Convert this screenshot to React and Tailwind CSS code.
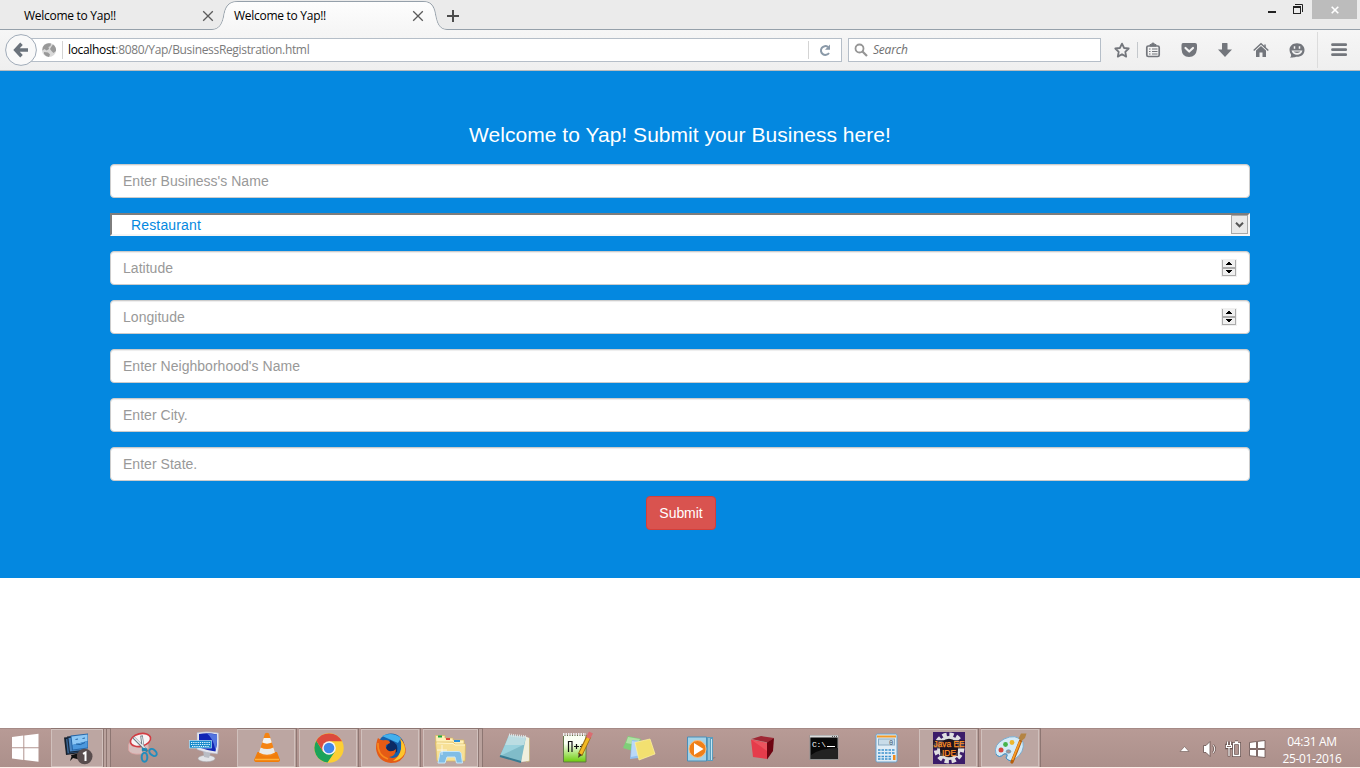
import React from 'react';

const UI = "font-['Open_Sans','Noto_Sans',sans-serif]";

/* ---------- tab strip ---------- */
function CloseX() {
  return (
    <svg width="12" height="12" viewBox="0 0 12 12" className="shrink-0">
      <path d="M1.2 1.2 10.8 10.8M10.8 1.2 1.2 10.8" stroke="#5a5a5a" strokeWidth="1.3" fill="none" />
    </svg>
  );
}

function TabStrip() {
  return (
    <div className={`relative flex h-[30px] w-full items-start bg-[#ebebeb] text-[12px] text-black ${UI}`}>
      <svg className="absolute left-0 top-0" width="1360" height="30" viewBox="0 0 1360 30">
        <defs>
          <linearGradient id="tabFill" x1="0" y1="0" x2="0" y2="1">
            <stop offset="0" stopColor="#fdfdfd" />
            <stop offset="1" stopColor="#f6f6f6" />
          </linearGradient>
        </defs>
        <path d="M0 29.5H212C219 29.5 222 24 223.5 17C225 8 227 1.5 238 1.5H423C433 1.5 434.500 8 436 17C437.500 24 440 29.5 447 29.5H1360" fill="none" stroke="#95a0aa" />
        <path d="M212 30C219 30 222.500 24 224 17C225.500 8 228 2 238 2H423C432 2 434 8 435.500 17C437 24 440 30 447 30Z" fill="url(#tabFill)" />
      </svg>
      <div className="relative flex h-8 w-[218px] items-center justify-between pl-6 pr-1">
        <span className="tracking-[-0.28px]">Welcome to Yap!!</span>
        <CloseX />
      </div>
      <div className="relative flex h-8 w-[210px] items-center justify-between pl-4 pr-1">
        <span className="tracking-[-0.28px]">Welcome to Yap!!</span>
        <CloseX />
      </div>
      <div className="relative flex h-8 items-center pl-[19px]">
        <svg width="12" height="12" viewBox="0 0 12 12">
          <path d="M6 0V12M0 6H12" stroke="#4c4c4c" strokeWidth="2" />
        </svg>
      </div>
      <div className="relative ml-auto flex h-[19px]">
        <svg width="48" height="19" viewBox="1264 0 48 19">
          <path d="M1268 11h8v2h-8z" fill="#222" />
          <path d="M1295 4.500H1302.500V12" fill="none" stroke="#222" />
          <path d="M1293 6h8v8h-8zM1294 8v5h6V8z" fill="#222" fillRule="evenodd" />
        </svg>
        <div className="mr-[3px] flex h-[19px] w-[45px] items-center justify-center bg-[#bcbcbc]">
          <svg width="8" height="8" viewBox="0 0 8 8" className="ml-[1px]">
            <path d="M.7.7 7.3 7.3M7.3.7.7 7.3" stroke="#fff" strokeWidth="1.6" />
          </svg>
        </div>
      </div>
    </div>
  );
}

/* ---------- navigation bar ---------- */
function ToolbarIcons() {
  return (
    <svg width="259" height="40" viewBox="1101 30 259 40" className="shrink-0">
      <path d="M1122 43.600 1124.100 48 1128.700 48.500 1125.300 51.800 1126.200 56.600 1122 54.200 1117.800 56.600 1118.700 51.800 1115.300 48.500 1119.900 48Z" fill="none" stroke="#73767c" strokeWidth="1.8" strokeLinejoin="round" />
      <path d="M1137.500 42V58" stroke="#c4c8cc" />
      <rect x="1146.800" y="46" width="12.400" height="10.500" rx="1.500" fill="none" stroke="#73767c" strokeWidth="1.700" />
      <path d="M1150 46V44.500H1151.500a1.500 1.500 0 0 1 3 0H1156V46Z" fill="#73767c" stroke="#73767c" />
      <path d="M1149 49h1.500M1152 49h5.500M1149 51.500h1.500M1152 51.500h5.500M1149 54h1.500M1152 54h5.500" stroke="#73767c" strokeWidth="1.200" />
      <path d="M1183 43H1195Q1197 43 1197 45V49Q1196 57 1189 57Q1182 57 1181.500 49V45Q1181.500 43 1183 43Z" fill="#73767c" />
      <path d="M1185.500 48 1189.200 51.500 1193 48" fill="none" stroke="#f4f4f4" strokeWidth="2.200" strokeLinecap="round" strokeLinejoin="round" />
      <path d="M1222 43.500Q1222 43 1222.500 43H1227Q1227.500 43 1227.500 43.500V49.500H1232L1225 57 1218 49.500H1222Z" fill="#73767c" />
      <path d="M1253.700 50.500 1261 43.800 1268.300 50.500" fill="none" stroke="#73767c" strokeWidth="1.500" />
      <path d="M1256 50.500 1261 46 1266 50.500V57H1262.500V52.500H1259.500V57H1256Z" fill="#73767c" />
      <path d="M1265 44.500v3" stroke="#73767c" strokeWidth="1.500" />
      <path d="M1297 43.200C1301.500 43.200 1304.500 46 1304.500 50S1301.500 56.800 1297 56.800C1296 56.800 1294.500 57.500 1290 57.800C1291 56.500 1291.300 55.500 1291 54.500C1290 53 1289.500 51.500 1289.500 50C1289.500 46 1292.500 43.200 1297 43.200Z" fill="#73767c" />
      <path d="M1294.500 46.200v2.600M1299.500 46.200v2.600" stroke="#f4f4f4" strokeWidth="1.500" />
      <path d="M1291.500 50.400H1302.500Q1301 54.700 1297 54.700T1291.500 50.400Z" fill="#f4f4f4" />
      <path d="M1293.500 51.600H1300.500Q1299.500 53 1297 53T1293.500 51.600Z" fill="#73767c" />
      <path d="M1317.500 32V68" stroke="#dcdcdc" />
      <path d="M1332.500 44.700h13.200M1332.500 49.700h13.200M1332.500 54.700h13.200" stroke="#73767c" strokeWidth="2.800" strokeLinecap="round" />
    </svg>
  );
}

function NavBar() {
  return (
    <div className={`flex h-[41px] w-full items-start border-b border-[#b9bdc0] bg-linear-to-b from-[#f6f6f6] to-[#efefef] text-[12px] ${UI}`}>
      <div className="relative mt-2 ml-[21px] flex h-6 w-[821px] shrink-0 items-center border border-[#b5bec8] bg-white">
        <svg width="32" height="32" viewBox="5 34 32 32" className="absolute -left-[17px] -top-[5px]">
          <circle cx="21" cy="50" r="15.400" fill="#f9f9f9" stroke="#a0abb8" />
          <path d="M28 50H17M21.500 43.800 15.700 50 21.500 56.200" fill="none" stroke="#6b737c" strokeWidth="3.500" />
        </svg>
        <svg width="20" height="20" viewBox="39 40 20 20" className="ml-[17px] shrink-0">
          <circle cx="49" cy="50" r="7" fill="#d9d9d9" />
          <path d="M44.500 44.800Q47.500 42.500 51 43.500L50.500 46 48.500 47 49 49 46.500 50.500 44.500 49 42.300 50.500Q42 47 44.500 44.800ZM53 44.500Q56.500 47 56 51L53.500 53 51.500 51 50 49 51.500 46.500ZM44 52 48 52.500 50 54.500 49 57Q45.500 56.500 44 54Z" fill="#999" />
        </svg>
        <div className="ml-[3px] h-[18px] w-px bg-[#d4d4d4]" />
        <span className="ml-[5px] whitespace-nowrap tracking-[-0.33px] text-[#7b7b7b]">
          <span className="text-black">localhost</span>:8080/Yap/BusinessRegistration.html
        </span>
        <div className="ml-auto flex h-[18px] w-[33px] items-center justify-center border-l border-[#d4d4d4]">
          <svg width="14" height="14" viewBox="0 0 14 14">
            <path d="M11 10A4.400 4.400 0 1 1 10 4" fill="none" stroke="#8a99a8" strokeWidth="2" />
            <path d="M12 1.500V6.700H7Z" fill="#8a99a8" />
          </svg>
        </div>
      </div>
      <div className="mt-2 ml-[6px] flex h-6 w-[253px] shrink-0 items-center border border-[#b5bec8] bg-white">
        <svg width="14" height="15" viewBox="0 0 14 15" className="ml-[5px]">
          <circle cx="5.500" cy="5.500" r="4" fill="none" stroke="#959595" strokeWidth="1.800" />
          <path d="M8.500 8.500 13 13" stroke="#959595" strokeWidth="2.200" />
        </svg>
        <span className="ml-[5px] italic tracking-[-0.2px] text-[#6f6f6f]">Search</span>
      </div>
      <ToolbarIcons />
    </div>
  );
}

/* ---------- page ---------- */
function Spinner() {
  return (
    <svg width="16" height="18" viewBox="0 0 16 18" className="shrink-0">
      <rect width="16" height="18" fill="#f0f0f0" />
      <path d="M1.500 1V17M14.500 1V17" stroke="#ababab" />
      <path d="M1 9H15" stroke="#ababab" strokeWidth="2" />
      <path d="M1 16.500H15" stroke="#ababab" />
      <path d="M5 6V5H6V4H7V3H9V4H10V5H11V6ZM5 11H11V12H10V13H9V14H7V13H6V12H5Z" fill="#000" />
    </svg>
  );
}

function Field({ label, number }) {
  return (
    <div className="mb-[15px] flex h-[34px] items-center rounded-[4px] border border-[#ccc] bg-white pl-3 pr-3 shadow-[inset_0_1px_1px_rgba(0,0,0,0.075)]">
      <input
        className="min-w-0 flex-1 bg-transparent text-[14px] leading-5 tracking-[0.03px] text-[#555] outline-none placeholder:text-[#999]"
        placeholder={label}
      />
      {number && <Spinner />}
    </div>
  );
}

function RegistrationPage() {
  return (
    <main className="h-[507px] w-full bg-[#0488e0] font-['Liberation_Sans',Arial,sans-serif]">
      <form className="mx-auto flex w-[1140px] flex-col pt-[50px]">
        <h1 className="mb-[13px] h-[30px] text-center text-[21px] leading-[28px] tracking-[0.04px] text-white">
          Welcome to Yap! Submit your Business here!
        </h1>
        <Field label="Enter Business's Name" />
        <div className="mb-[15px] flex h-[23px] items-center justify-between border-2 border-b-[#f5f5f5] border-l-[#7d7d7d] border-r-[#f5f5f5] border-t-[#7d7d7d] bg-white pl-[19px] text-[14px] text-[#0488e0]">
          <span className="leading-5 tracking-[0.15px]">Restaurant</span>
          <div className="flex h-[19px] w-[17px] items-center justify-center border border-[#a9a9a9] bg-[#e9e9e9]">
            <svg width="9" height="7" viewBox="0 0 9 7">
              <path d="M1 1.800 4.500 5.300 8 1.800" fill="none" stroke="#555" strokeWidth="2" />
            </svg>
          </div>
        </div>
        <Field label="Latitude" number />
        <Field label="Longitude" number />
        <Field label="Enter Neighborhood's Name" />
        <Field label="Enter City." />
        <Field label="Enter State." />
        <button type="button" className="ml-[536px] h-[34px] w-[70px] rounded-[4px] border border-[#d43f3a] bg-[#d9534f] text-[14px] leading-5 tracking-[-0.05px] text-white">
          Submit
        </button>
      </form>
    </main>
  );
}

/* ---------- taskbar ---------- */
/* Each drawing uses screen coordinates; its svg windows it by the cell's left edge. */
const DesktopArt = () => (
  <g>
    <path d="M64 737.500 80 736 81 753 66 755Z" fill="#16202c" />
    <path d="M66 739 80 737.500V752L67.500 753.500Z" fill="#3c6796" />
    <path d="M67 736.500 83 735 84 751 69 753Z" fill="#1a2c42" />
    <path d="M68.500 738 83 736.500V750L70 751.500Z" fill="#4b86c2" />
    <path d="M70.500 735.500 88 733.500 88 748.500 72 750.500Z" fill="#2566a8" />
    <path d="M71.500 736.500 87.500 734.500V741L72.500 745Z" fill="#8cc7f5" />
    <path d="M72.500 745 87.500 741V747.500L73 749.500Z" fill="#4c98dd" />
    <path d="M75.500 739.500 78 739M82.500 738.500 85 738M76 744Q80 746 85 742.500" stroke="#1c5c9c" strokeWidth=".9" fill="none" />
    <path d="M71 755 80 753 78 757 82 760 77 759 73 758 70 761 71.500 756.500Z" fill="#111" />
    <circle cx="84.700" cy="756.500" r="7.800" fill="#594d4e" />
    <path d="M83 753.800 85.500 752.500V761" fill="none" stroke="#fff" strokeWidth="2" />
  </g>
);
const SnipArt = () => (
  <g>
    <path d="M128.500 745Q130 738 140 741L148 744Q150 752 141 754Q130 755 128.500 750Z" fill="#d7bebd" stroke="#dc9fa0" strokeWidth=".8" />
    <ellipse cx="140.500" cy="740" rx="10.300" ry="6.300" fill="#f7f4f5" stroke="#d23c42" strokeWidth="1.600" transform="rotate(-14 140.500 740)" />
    <path d="M133.500 737.500 147.500 751.500M141.500 735.500 143.500 751.500" stroke="#6d7880" strokeWidth="2.600" />
    <path d="M134 737.500 146 749.500M141.700 736.500 143.500 749" stroke="#edf3f6" strokeWidth="1.100" />
    <path d="M142 749 147 750" stroke="#1e87b4" strokeWidth="3" />
    <ellipse cx="144.500" cy="757.300" rx="2.800" ry="4.500" fill="none" stroke="#228dbd" strokeWidth="2" />
    <ellipse cx="153" cy="752.500" rx="4.300" ry="2.800" fill="none" stroke="#228dbd" strokeWidth="2" transform="rotate(42 153 752.500)" />
  </g>
);
const KeyboardArt = () => (
  <g>
    <ellipse cx="206.500" cy="758.500" rx="8.500" ry="3.300" fill="#e2e4e8" stroke="#aaa6aa" strokeWidth=".6" />
    <path d="M203 750 211 752 209 758 204 757Z" fill="#b9bdc5" />
    <path d="M197 732.500Q208 731 218.500 733Q219.500 745 217.500 754Q206 753 197 749.500Z" fill="#e6e7ee" stroke="#aaaabb" strokeWidth=".5" />
    <path d="M199 734Q208 732.500 217 734.500Q217.500 744 215.500 751.500Q206 750 199 747.500Z" fill="#1226b5" />
    <path d="M207 733.500 217 734.500Q217.500 744 215.500 750Q213 738 207 733.500Z" fill="#5475de" />
    <rect x="189.500" y="740.500" width="22" height="7.500" fill="#168acb" stroke="#b3e1f8" strokeWidth=".7" />
    <path d="M191 742.500H210M191 744.500H210M192 746.500H209" stroke="#e7f8ff" strokeDasharray="1.300 .9" />
  </g>
);
const VlcArt = () => (
  <g>
    <path d="M257.500 752H277L280 760Q280 762 277 762H257Q254 762 254 760Z" fill="#f07d0b" />
    <path d="M255 759.500H279" stroke="#ffb23d" strokeWidth="1.500" />
    <path d="M265 733.500Q267 732 269 733.500L275.500 754Q267 759 258.500 754Z" fill="#f58413" />
    <path d="M263.700 738H270.300L271.800 742.500Q267 744.800 262.300 742.500Z" fill="#f4f4f2" />
    <path d="M260.600 747.500Q267 750.500 273.400 747.500L275 752.500Q267 757 259 752.500Z" fill="#e9eae9" />
  </g>
);
const ChromeArt = () => (
  <g>
    <circle cx="329" cy="748" r="14.700" fill="#fccf33" />
    <path d="M316.300 740.700A14.700 14.700 0 0 0 327.500 762.600L335 751.500 323 751.500Z" fill="#1ba35a" />
    <path d="M316.300 740.700 323 751.500 329 741.200H342A14.700 14.700 0 0 0 316.300 740.700Z" fill="#dc4b3d" />
    <circle cx="329" cy="748" r="6.800" fill="#f4f5f5" />
    <circle cx="329" cy="748" r="5.300" fill="#3f86ea" />
  </g>
);
const FirefoxArt = () => (
  <g>
    <circle cx="391" cy="747" r="13.500" fill="#1461ad" />
    <path d="M382 736Q392 731 401 738L398 743 389 739Z" fill="#42b0ed" />
    <path d="M390 740Q399 743 397 752L388 755 385 750Z" fill="#0c2a64" />
    <path d="M378 738Q381 741 385 740Q390 740 390 743L386 745Q385 749 389 751Q393 752 396 749Q396 756 389 757Q396 760 400 753Q403 746 400 738Q407 745 405.500 753Q402 763 391 763Q378 762 376 749Q376 742 378 738Z" fill="#e55b15" />
    <path d="M400 738Q407 746 404.500 754Q400 761 393 761Q400 756 401 749Q402 743 400 738Z" fill="#fdc52d" />
    <path d="M378 743Q377 755 388 759" stroke="#f98a1e" strokeWidth="1.500" fill="none" />
  </g>
);
const ExplorerArt = () => (
  <g>
    <path d="M435.500 735.500H445V738H453V740H464V745H436Z" fill="#fff0b7" stroke="#d8b85d" strokeWidth=".7" />
    <path d="M438 736.500h4" stroke="#1aa743" strokeWidth="2" /><path d="M446 739h4" stroke="#e14738" strokeWidth="2" /><path d="M454 741h6" stroke="#298ed6" strokeWidth="2" />
    <path d="M435.500 742H453L455 744H465.500L465 761H437Z" fill="#f7e096" stroke="#d8b85d" strokeWidth=".7" />
    <path d="M437 743 453 743.500 455 745H465" stroke="#fff6ce" fill="none" />
    <path d="M440 753Q440 751.500 442 751.500H458Q460.500 751.500 461 753L462.500 763H456.500L455 757H447L445 763H438Z" fill="#80bde5" stroke="#c7e7f8" />
    <path d="M442 745V755M437 750H447" stroke="#fff" opacity=".7" />
  </g>
);
const NotepadArt = () => (
  <g>
    <path d="M524 736 529.500 738V761L521 762Z" fill="#f1efdd" />
    <path d="M529.500 738V761L526 762" stroke="#c9b989" fill="none" />
    <path d="M509 735 526 737 521 762 500 756Z" fill="#80bcc9" />
    <path d="M509 735 526 737 524 745 505 745Z" fill="#bcdde2" />
    <path d="M505 745 523 745 500 756Z" fill="#9bd2dd" />
    <path d="M500 756 521 762" stroke="#377b92" strokeWidth="2" />
    <path d="M509 735 527 737" stroke="#dfe5e5" strokeWidth="3" strokeDasharray="1 1" />
  </g>
);
const NppArt = () => (
  <g>
    <defs><linearGradient id="npp" x1="0" y1="0" x2="0" y2="1"><stop offset=".3" stopColor="#fafff3" /><stop offset="1" stopColor="#6bcd0a" /></linearGradient></defs>
    <path d="M563.500 735.500H586V762H563.500Z" fill="url(#npp)" stroke="#647748" />
    <path d="M563 734.500H586" stroke="#eee" strokeWidth="3" strokeDasharray="1.500 1" />
    <path d="M568.500 752V741.500H572V752M574 746.500H579M576.500 744V749M580 746.500H584.500M582.200 744V749" fill="none" stroke="#111" strokeWidth="1.200" />
    <path d="M589 736 580 755" stroke="#9b6b10" strokeWidth="5" /><path d="M588.800 737 580.500 754" stroke="#f2ba24" strokeWidth="3" />
    <path d="M591 732.500 588 738" stroke="#db6c71" strokeWidth="4.500" /><path d="M579 753 578 758 582 755Z" fill="#463b26" />
  </g>
);
const StickyArt = () => (
  <g>
    <path d="M628 736 641 739 636 752 623 748Z" fill="#7fcf78" /><path d="M628 737 640 739 637 745 626 743Z" fill="#b0e2a5" />
    <path d="M632 740 648 742 647 757 630 759Z" fill="#91c0ef" /><path d="M632 741 647 743 646 754 631 757Z" fill="#b9d8f7" />
    <path d="M635 742.500 650 739 655 754 639 760Z" fill="#f2e070" stroke="#fff4a0" strokeWidth=".7" />
  </g>
);
const MediaArt = () => (
  <g>
    <path d="M699 758 716 757 711 761H699Z" fill="#7c6968" opacity=".5" />
    <path d="M692 737H713V761H692Z" fill="#5a9dbe" /><path d="M709 738V760M711.500 739V760" stroke="#c4e6f3" />
    <path d="M687.500 737H706.500V761H687.500Z" fill="#a4d2e7" stroke="#4a8fb8" />
    <circle cx="697.500" cy="749" r="8.500" fill="#f08018" stroke="#f8bb7c" />
    <path d="M694 743 703.500 749 694 755Z" fill="#fff" />
  </g>
);
const CubeArt = () => (
  <g>
    <path d="M751.500 739 761 736 774 738 767.500 742.500Z" fill="#9f2734" />
    <path d="M751 739.500 767 743V759L753 757Z" fill="#e53c4b" />
    <path d="M767 742.500 774 738 773 751 767 759.500Z" fill="#6e0411" />
    <path d="M751.500 740 767 743V751Z" fill="#f0636b" opacity=".6" />
  </g>
);
const CmdArt = () => (
  <g>
    <rect x="810" y="735.500" width="28" height="24" fill="#080808" stroke="#929292" />
    <path d="M810 736.500H838" stroke="#ddd" strokeWidth="2" /><path d="M832 736.500H837" stroke="#555" strokeDasharray="1 1" />
    <path d="M811 755Q820 748 838 748V759H811Z" fill="#222" />
    <text x="812" y="746.500" fontSize="8" fill="#fff" fontFamily="Liberation Mono, monospace" textLength="14">C:\</text>
    <path d="M827 746.500h8" stroke="#fff" />
  </g>
);
const CalcArt = () => (
  <g>
    <rect x="876" y="734" width="21" height="28" rx="1.500" fill="#e1edf6" stroke="#6aa5d0" />
    <path d="M877 736.500H896" stroke="#f29a26" strokeWidth="2" />
    <rect x="878.500" y="739" width="16" height="6" fill="#c9dce9" stroke="#8cadc4" />
    <text x="889" y="744.500" fontSize="7" fill="#3d5669" fontFamily="Liberation Mono, monospace">0</text>
    <path d="M878 750H895M878 753H895M878 756.500H892M878 759H892" stroke="#3c91cd" strokeWidth="1.700" strokeDasharray="2.500 1" />
    <path d="M893 755h2.500v5h-2.500z" fill="#f08b1b" />
  </g>
);
const EclipseArt = () => (
  <g>
    <rect x="933" y="732" width="32" height="32" fill="#3b1c69" />
    <circle cx="949" cy="748" r="13.200" fill="none" stroke="#e0dfe2" strokeWidth="4.500" strokeDasharray="4.200 2.711" />
    <circle cx="949" cy="748" r="10.600" fill="#17121c" stroke="#dedee0" strokeWidth="2.800" />
    <path d="M933 740H965V748.500H958V756H940V748.500H933Z" fill="#21141d" opacity=".75" />
    <text x="949" y="747.300" textAnchor="middle" fontSize="9" fill="#ff9128" stroke="#ff9128" strokeWidth=".25" fontFamily="Liberation Sans, sans-serif" textLength="31" lengthAdjust="spacingAndGlyphs">Java EE</text>
    <text x="949" y="756" textAnchor="middle" fontSize="9" fill="#ff9128" stroke="#ff9128" strokeWidth=".25" fontFamily="Liberation Sans, sans-serif" textLength="14" lengthAdjust="spacingAndGlyphs">IDE</text>
  </g>
);
const PaintArt = () => (
  <g>
    <path d="M1004 739Q1016 733 1023 742Q1025 752 1015 759Q1010 763 1006 758Q1009 753 1004 754Q999 759 996 754Q993 745 1004 739Z" fill="#d5ebf7" stroke="#79acd0" />
    <path d="M996 754Q999 759 1004 754Q1009 753 1006 758Q1010 763 1015 759" fill="none" stroke="#4a91c0" />
    <ellipse cx="1008.500" cy="751.500" rx="2.300" ry="1.700" fill="#ad928d" stroke="#5790b5" strokeWidth=".7" />
    <circle cx="1001" cy="750" r="2.500" fill="#d9473d" /><circle cx="1005.500" cy="744.500" r="2.400" fill="#45b44d" /><circle cx="1012" cy="742.500" r="2.400" fill="#ecb72e" />
    <path d="M1020.500 741 1012 762" stroke="#b45e0c" strokeWidth="3.200" strokeLinecap="round" /><path d="M1020 741.500 1012.500 760" stroke="#f99d29" strokeWidth="1.800" />
    <path d="M1018.500 738.500 1021 733.500 1026.500 733.500 1025 738 1021.500 741Z" fill="#b48443" />
  </g>
);

const APPS = [
  { Art: DesktopArt, x: 50, open: 'stack2' },
  { Art: SnipArt, x: 112 },
  { Art: KeyboardArt, x: 174 },
  { Art: VlcArt, x: 236, open: 'one' },
  { Art: ChromeArt, x: 298, open: 'one' },
  { Art: FirefoxArt, x: 360, open: 'one' },
  { Art: ExplorerArt, x: 422, open: 'stack' },
  { Art: NotepadArt, x: 484 },
  { Art: NppArt, x: 546 },
  { Art: StickyArt, x: 608 },
  { Art: MediaArt, x: 670 },
  { Art: CubeArt, x: 732 },
  { Art: CmdArt, x: 794 },
  { Art: CalcArt, x: 856 },
  { Art: EclipseArt, x: 918, open: 'one' },
  { Art: PaintArt, x: 980, open: 'one' },
];

function Frame({ x, kind }) {
  const w = kind === 'stack2' ? 52 : kind === 'stack' ? 55 : 58;
  return (
    <g>
      <rect x={x + 1} y="728" width="60" height="39" fill="#8d7672" />
      <rect x={x + 2} y="729" width="58" height="38" fill="#b9a19c" />
      <rect x={x + 1.5} y="729.5" width={w - 1} height="37" fill="#bca6a2" stroke="#d0c0bc" />
      {kind !== 'one' && <path d={`M${x + w + 1.5} 728V767`} stroke="#8d7672" />}
      {kind === 'stack2' && <path d={`M${x + 56.5} 728V767`} stroke="#8d7672" />}
    </g>
  );
}

function Taskbar() {
  return (
    <footer className={`flex h-10 w-full items-start border-b border-[#fdeee8] bg-linear-to-b from-[#b89b96] to-[#ac908b] shadow-[inset_0_1px_0_#a58a86] ${UI}`}>
      <svg width="50" height="39" viewBox="0 728 50 39" className="shrink-0">
        <path d="M12 737 23.300 735.500V747.300H12ZM24.300 735.400 38.500 733.800V747.300H24.300ZM12 748.300H23.300V760L12 758.500ZM24.300 748.300H38.500V761.800L24.300 760.100Z" fill="#fff" />
      </svg>
      {APPS.map(({ Art, x, open }) => (
        <svg key={x} width="62" height="39" viewBox={`${x} 728 62 39`} className="shrink-0">
          {open && <Frame x={x} kind={open} />}
          <Art />
        </svg>
      ))}
      <svg width="98" height="39" viewBox="1172 728 98 39" className="ml-[130px] shrink-0">
        <path d="M1180 751.500 1184.500 746.500 1189 751.500Z" fill="#fff" stroke="#7a6562" strokeWidth=".7" />
        <g fill="#fff" stroke="#67524f" strokeWidth=".8">
          <path d="M1203.500 745.500H1206L1210 741.500V756.500L1206 752.500H1203.500Z" />
          <path d="M1249.500 742.500 1256.500 741.500V748.500H1249.500ZM1257.500 741.400 1265 740.500V748.500H1257.500ZM1249.500 749.500H1256.500V756.500L1249.500 755.700ZM1257.500 749.500H1265V757.500L1257.500 756.700Z" />
        </g>
        <path d="M1213 745Q1216.500 749 1213 753" fill="none" stroke="#67524f" strokeWidth="2.400" />
        <path d="M1213 745Q1216.500 749 1213 753" fill="none" stroke="#f4eeec" strokeWidth="1.100" />
        <path d="M1233.500 743.500H1239.500V755.500H1233.500ZM1235 742H1238" fill="none" stroke="#67524f" strokeWidth="3" />
        <path d="M1233.500 743.500H1239.500V755.500H1233.500ZM1235 742H1238" fill="none" stroke="#fff" strokeWidth="1.400" />
        <path d="M1226.500 745H1231.500V748H1226.500ZM1227.500 741.500V745M1230.500 741.500V745M1229 748V756.500" fill="none" stroke="#67524f" strokeWidth="2.600" />
        <path d="M1226.500 745.500H1231.500V747.500H1226.500ZM1227.500 741.500V745M1230.500 741.500V745M1229 748V756" fill="none" stroke="#fff" strokeWidth="1.200" />
      </svg>
      <div className="flex h-[39px] w-[84px] shrink-0 flex-col items-center pt-[5px] text-[12px] leading-[17px] tracking-[-0.35px] text-white">
        <span>04:31 AM</span>
        <span>25-01-2016</span>
      </div>
    </footer>
  );
}

export default function App() {
  return (
    <div className="flex h-[768px] w-[1360px] flex-col overflow-hidden bg-white">
      <TabStrip />
      <NavBar />
      <RegistrationPage />
      <div className="flex-1 bg-white" />
      <Taskbar />
    </div>
  );
}
